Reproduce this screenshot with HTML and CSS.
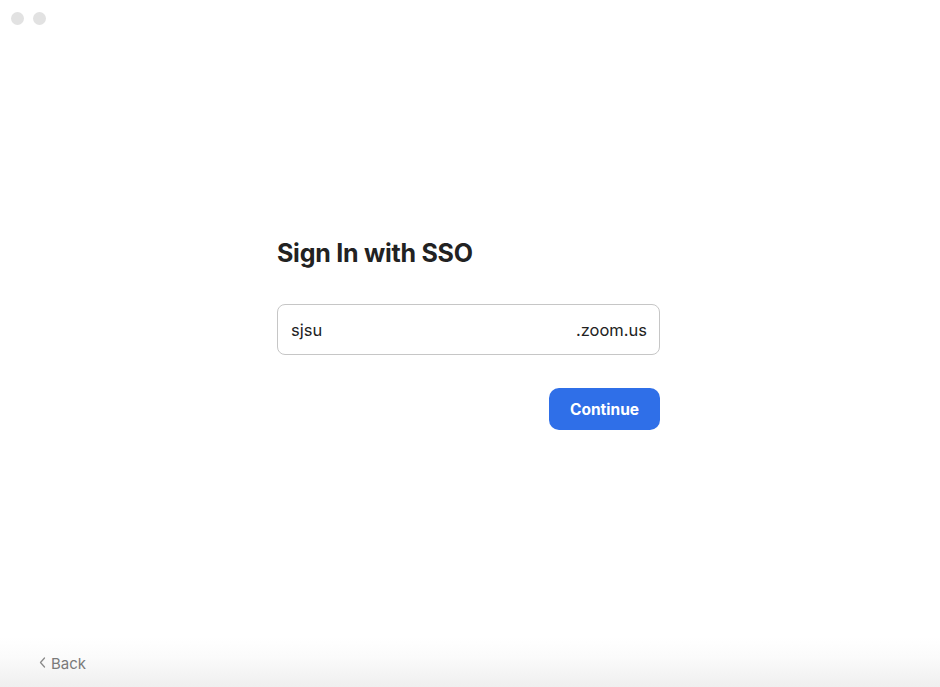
FILE: index.html
```html
<!DOCTYPE html>
<html>
<head>
<meta charset="utf-8">
<link rel="stylesheet" href="styles.css">
</head>
<body>
<div class="window">
  <div class="titlebar">
    <span class="light"></span>
    <span class="light"></span>
  </div>
  <main class="content">
    <div class="form">
      <h1 class="title">Sign In with SSO</h1>
      <div class="field">
        <span class="value">sjsu</span>
        <span class="suffix">.zoom.us</span>
      </div>
      <div class="actions">
        <button class="btn">Continue</button>
      </div>
    </div>
  </main>
  <footer class="footer">
    <a class="back">
      <svg class="chev" width="7" height="11" viewBox="0 0 7 11"><path d="M5.5 1 L1.5 5.5 L5.5 10" fill="none" stroke="#8a8a8a" stroke-width="1.3" stroke-linecap="round" stroke-linejoin="round"/></svg>
      <span>Back</span>
    </a>
  </footer>
</div>
</body>
</html>
```

FILE: styles.css
```css
* { box-sizing: border-box; }
html, body { margin: 0; padding: 0; }
body {
  width: 940px;
  height: 687px;
  background: #fff;
  font-family: Inter, "Noto Sans", sans-serif;
  overflow: hidden;
}
.window {
  height: 687px;
  display: flex;
  flex-direction: column;
}
.titlebar {
  height: 37px;
  display: flex;
  gap: 9px;
  padding: 12px 0 0 11px;
}
.light {
  width: 13px;
  height: 13px;
  border-radius: 50%;
  background: #e2e2e2;
}
.content {
  flex: 1;
  padding: 200px 0 0 277px;
}
.form {
  width: 383px;
  display: flex;
  flex-direction: column;
}
.title {
  margin: 0;
  font-size: 25px;
  font-weight: 700;
  color: #222;
  letter-spacing: -0.25px;
  line-height: 32px;
}
.field {
  margin-top: 35px;
  height: 51px;
  border: 1px solid #c6c6c6;
  border-radius: 8px;
  display: flex;
  align-items: center;
  justify-content: space-between;
  padding: 0 12px 0 13px;
  font-size: 16.5px;
  color: #222;
}
.actions {
  margin-top: 33px;
  display: flex;
  justify-content: flex-end;
}
.btn {
  width: 111px;
  height: 42px;
  border: none;
  border-radius: 10px;
  background: #2f6fe8;
  color: #fff;
  font-family: inherit;
  font-size: 15.5px;
  font-weight: 700;
}
.footer {
  height: 50px;
  background: linear-gradient(#ffffff, #fbfbfb 40%, #efefef);
  padding: 17px 0 0 39px;
}
.back {
  display: flex;
  align-items: center;
  gap: 5px;
  color: #7a7a7a;
  font-size: 15px;
}
.chev { margin-top: -2px; }
```
